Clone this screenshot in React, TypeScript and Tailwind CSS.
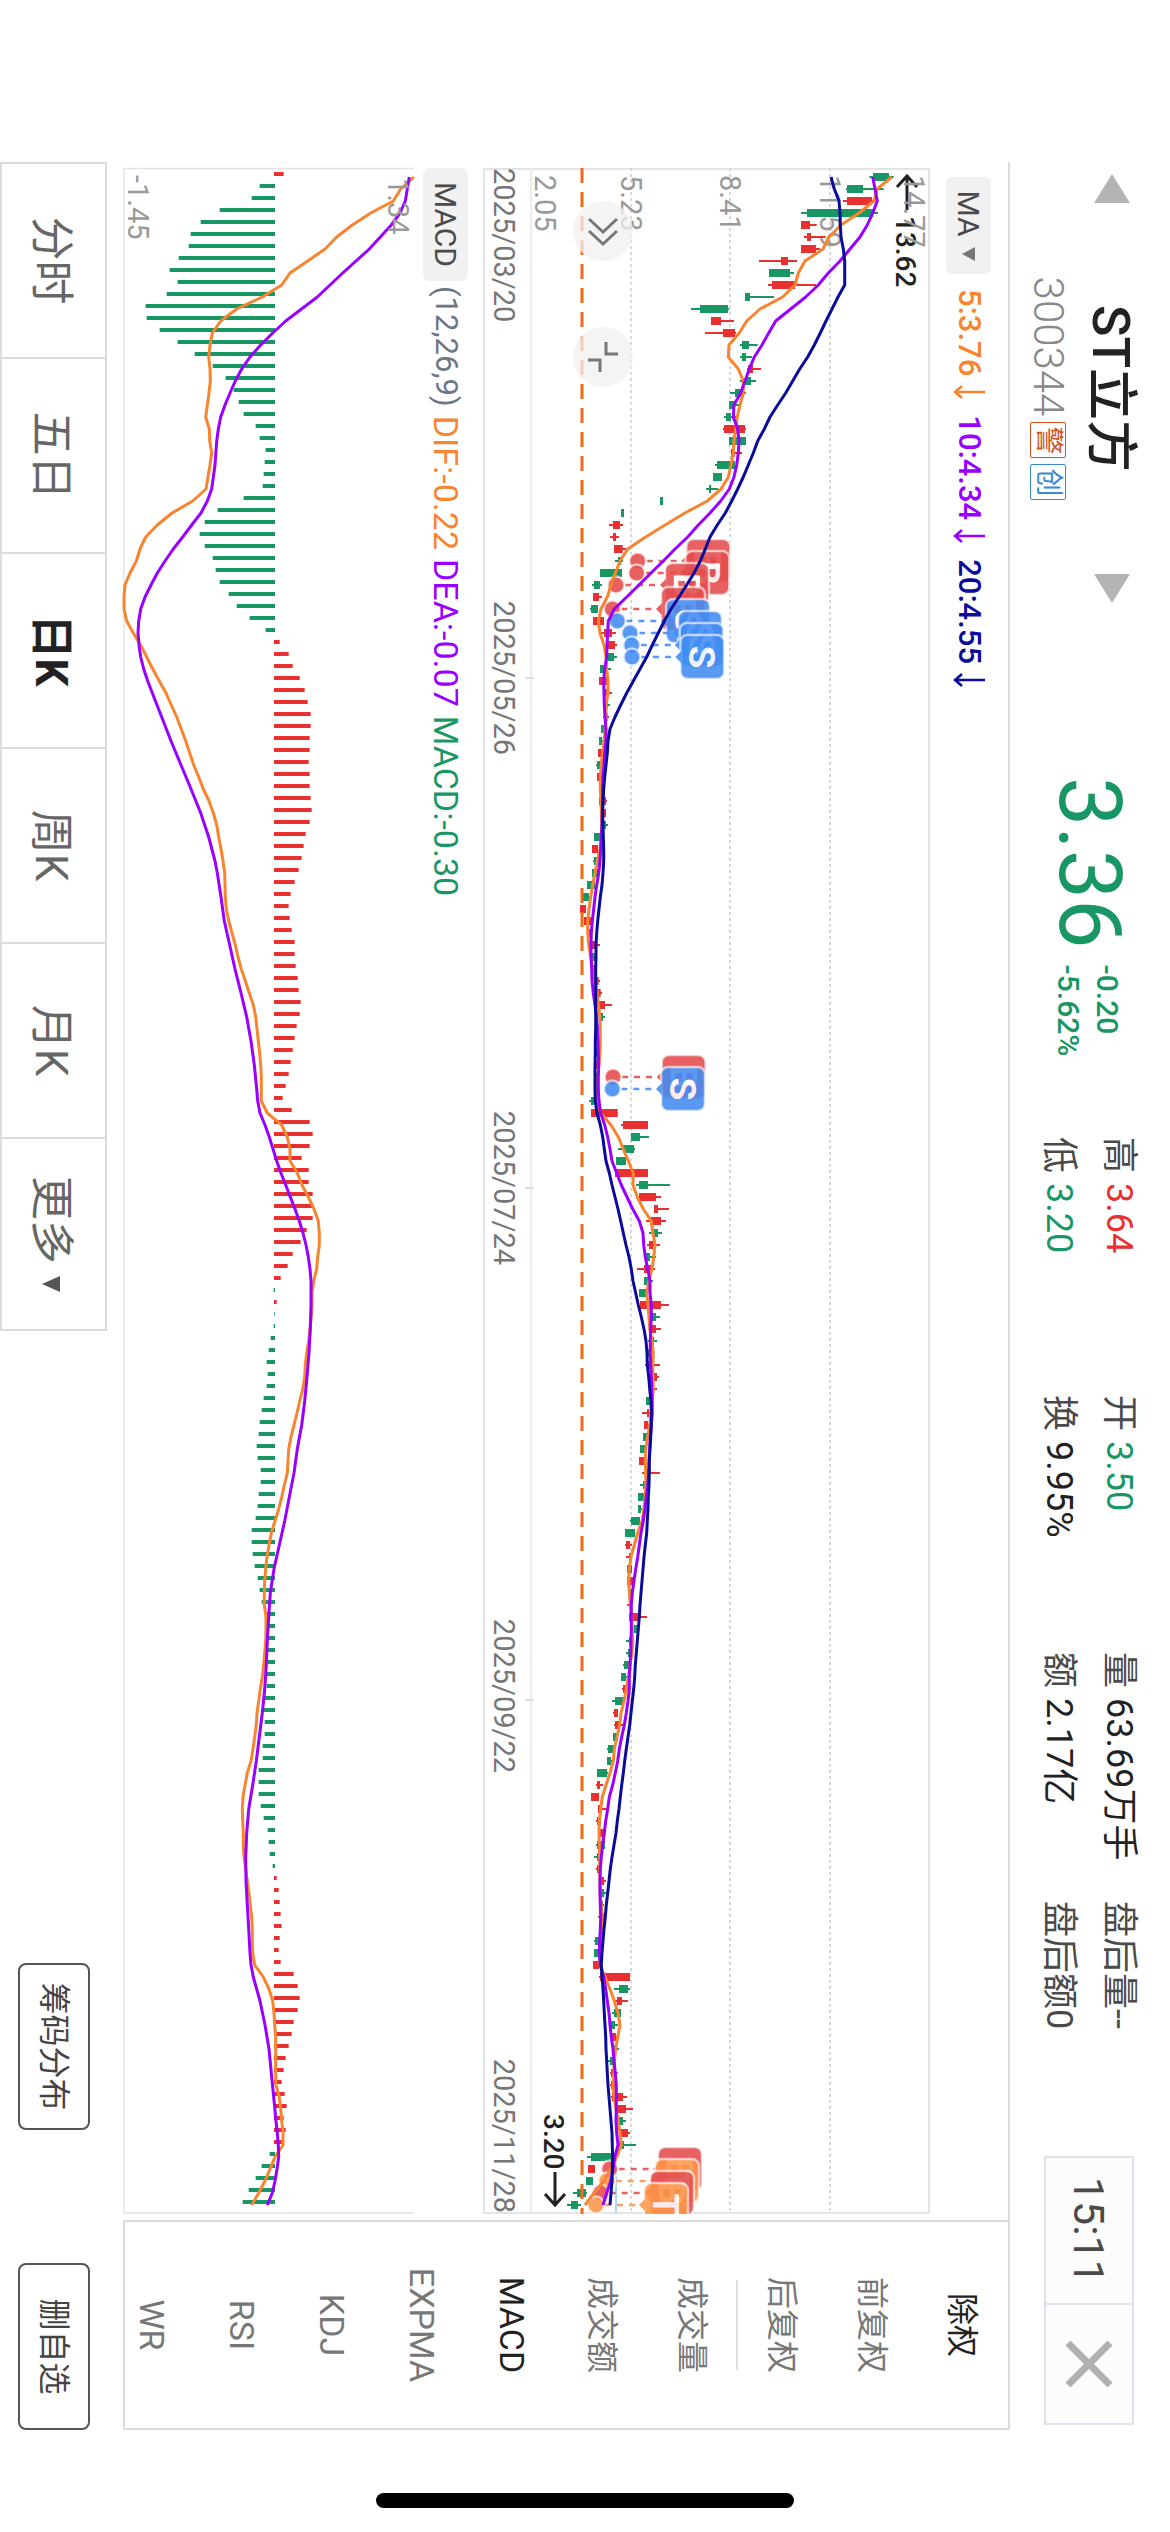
import React from "react";

/* ---------- chart data (levels in thirds of a pixel above the plot origin) ---------- */

// color, low, body low, body high, high
const CANDLES = `g 1168 1179 1227 1241|g 1098 1101 1149 1211|r 1089 1101 1176 1182|g 963 981 1180 1194|r 963 963 990 1010|r 972 981 993 1037|r 963 963 1008 1020|r 837 903 924 951|g 867 867 930 942|r 864 876 945 1008|g 795 795 810 882|g 633 660 744 747|r 693 693 723 762|r 675 729 765 768|g 780 786 807 833|g 780 786 798 816|r 801 804 819 843|g 780 795 813 828|g 750 765 792 798|g 747 747 765 780|g 732 738 753 768|r 729 732 795 798|g 747 747 798 798|r 753 753 764 786|g 705 711 765 765|g 699 699 726 726|g 678 687 693 714|g 540 540 549 549|g 423 423 432 432|r 387 399 420 429|r 390 399 408 417|r 402 402 428 438|g 405 414 424 429|g 360 360 426 426|g 336 342 360 366|r 339 339 357 366|g 330 333 354 354|r 339 339 372 372|r 363 372 396 408|r 378 380 405 411|g 378 384 402 411|g 360 360 384 393|r 357 357 381 381|r 375 375 387 396|g 372 375 383 390|r 369 372 383 387|g 363 363 375 375|g 357 357 366 375|r 354 354 370 370|g 348 351 366 366|r 351 351 366 366|g 357 357 366 366|r 357 357 378 381|r 366 366 378 378|g 360 366 378 384|g 342 342 363 363|r 336 336 354 354|g 339 342 357 357|g 336 336 354 354|g 321 321 345 345|g 309 309 327 330|r 300 300 318 318|r 312 312 333 333|r 324 324 336 336|r 333 336 348 360|g 333 336 348 348|r 339 339 348 348|r 348 350 356 360|r 350 353 362 366|r 357 357 375 396|g 357 360 369 375|g 345 348 357 360|r 348 348 357 357|g 345 345 357 357|r 345 345 356 356|g 345 345 354 354|r 345 345 354 354|g 327 333 342 342|r 333 333 413 413|r 423 429 504 504|g 453 453 480 507|g 414 429 462 465|g 408 408 438 438|r 405 405 504 504|g 468 477 504 570|r 477 477 528 543|r 522 522 534 567|r 498 510 543 558|g 507 516 534 546|r 501 507 519 540|g 495 498 510 528|r 471 492 513 525|g 492 492 507 519|g 477 477 499 499|r 480 480 543 567|g 516 516 528 540|r 516 516 528 543|g 504 513 522 531|g 498 501 513 513|r 495 501 510 540|r 516 522 531 537|r 510 513 520 531|g 498 498 510 510|r 486 501 507 510|r 492 492 504 513|g 489 489 504 504|g 480 480 495 495|r 477 477 495 495|r 486 495 507 540|g 480 489 495 495|g 474 474 492 492|g 474 474 483 486|g 450 453 480 480|g 435 435 465 465|r 435 438 450 456|r 438 447 453 456|g 441 441 456 456|r 441 441 459 462|g 444 450 456 458|r 441 447 452 455|r 447 447 474 501|g 462 462 474 474|g 438 447 453 456|g 438 444 453 456|g 429 432 450 450|g 423 423 438 444|r 426 429 439 444|g 396 405 432 435|r 399 402 414 414|r 402 405 417 432|g 399 399 414 414|g 381 384 402 405|g 381 381 393 399|g 351 351 381 384|r 348 351 360 369|r 333 333 357 357|r 354 354 366 384|r 348 351 363 363|r 357 360 372 372|g 348 351 375 375|g 342 351 362 362|r 348 351 363 363|r 363 363 372 378|g 360 363 372 378|g 360 363 369 372|r 354 360 372 372|r 360 360 367 367|g 342 345 360 360|g 342 342 354 354|r 339 339 357 357|r 357 360 450 450|g 402 417 444 450|r 405 411 426 444|g 396 402 423 423|g 390 390 405 414|r 393 393 408 411|g 396 399 408 417|g 384 390 402 402|r 390 393 405 413|r 390 393 405 408|r 393 396 429 441|r 411 411 438 459|g 411 414 429 438|r 420 423 444 450|g 414 414 432 468|g 321 333 399 399|r 324 324 345 345|g 318 318 339 339|g 279 291 318 321|g 261 273 294 303`
  .split("|")
  .map((row) => {
    const [tone, ...levels] = row.split(" ");
    return { tone, levels: levels.map(Number) };
  });

const MA5 = [1235,1192,1182,1137,1083,1047,1029,975,955,945,908,840,800,778,747,745,775,790,790,780,772,767,762,760,753,745,723,682,615,555,497,443,420,406,393,382,363,355,360,372,378,380,384,384,378,378,376,372,368,364,361,361,363,364,365,364,360,352,345,338,332,327,323,323,326,332,338,345,352,355,360,361,361,360,357,353,352,352,362,393,415,430,445,460,459,472,490,514,519,525,521,516,507,500,504,507,509,516,520,518,519,520,517,514,509,503,497,496,497,498,495,492,486,473,463,453,448,446,448,451,455,457,458,456,450,445,439,432,423,419,411,403,400,390,378,367,362,358,357,358,359,359,360,360,364,367,367,364,359,360,375,390,403,414,420,413,407,403,401,399,402,408,415,420,424,410,392,372,342,315];
const MA10 = [1178,1185,1192,1178,1162,1140,1110,1080,1045,1015,977,932,887,866,846,823,808,795,782,762,760,773,777,775,770,762,748,722,690,655,623,585,550,513,477,440,403,385,383,381,380,374,371,372,373,375,378,378,374,372,369,368,368,367,366,364,362,360,356,350,345,341,337,334,333,333,335,336,340,345,350,352,354,355,356,355,355,357,362,374,383,390,396,410,424,441,458,478,489,491,496,503,510,510,514,514,512,511,511,512,514,515,516,517,514,511,509,507,506,503,499,495,490,483,478,473,467,462,457,454,454,454,453,452,450,448,448,444,439,433,425,418,413,406,398,388,383,377,373,368,364,361,360,360,361,362,361,359,358,361,371,377,382,387,390,394,399,402,406,409,409,409,408,410,414,404,399,392,380,369];
const MA20 = [1053,1063,1077,1080,1081,1083,1090,1094,1094,1094,1074,1056,1038,1021,1003,983,959,938,917,893,870,853,833,820,805,790,773,755,736,712,690,676,661,642,620,597,573,553,535,517,500,480,460,440,422,405,390,384,382,378,374,371,369,368,369,370,371,371,369,366,361,357,353,350,348,348,347,347,347,347,347,347,346,346,345,345,345,346,351,361,368,373,378,388,396,405,414,422,430,438,447,454,459,467,475,484,492,498,501,502,506,509,513,514,514,512,510,508,508,507,505,504,502,500,496,492,489,486,483,480,478,475,472,469,466,464,461,457,453,449,444,439,434,430,425,421,417,412,408,402,396,391,387,383,379,376,372,369,366,364,366,369,371,373,375,377,378,380,382,384,387,390,393,396,397,398,397,396,393,390];

const HISTOGRAM = [29,-46,-70,-166,-223,-253,-259,-289,-316,-292,-325,-388,-385,-346,-292,-241,-187,-148,-124,-109,-94,-58,-46,-28,-31,-34,-37,-94,-172,-211,-226,-211,-187,-178,-166,-139,-115,-76,-28,17,44,56,77,92,101,110,110,107,107,104,107,107,110,113,107,95,89,83,74,62,50,44,47,53,62,62,65,71,74,80,77,68,62,56,50,44,35,26,53,107,116,107,83,104,104,116,118,116,98,80,56,41,20,-4,8,-2,-4,-13,-19,-25,-22,-25,-34,-40,-46,-49,-55,-52,-43,-43,-49,-52,-58,-70,-70,-67,-61,-52,-46,-40,-25,-23,-22,-21,-22,-25,-25,-30,-33,-31,-31,-37,-37,-49,-49,-49,-43,-34,-22,-19,-16,-7,8,14,17,20,23,17,14,20,59,71,77,71,59,53,44,35,29,23,32,38,29,35,26,-16,-40,-58,-79,-97];
const DIF = [942,902,880,812,757,710,675,623,570,545,487,410,362,337,330,326,330,331,327,322,317,328,329,335,330,324,318,278,216,172,137,120,109,90,75,72,72,80,100,122,140,158,178,198,214,230,244,257,269,281,296,310,327,340,350,356,363,369,374,375,376,379,386,396,406,414,424,436,448,460,467,471,475,479,482,484,484,484,502,545,562,570,570,592,606,625,642,655,658,658,653,650,641,636,636,634,630,626,620,616,614,608,599,591,582,573,566,564,562,553,545,536,525,514,507,501,497,494,493,493,498,498,497,494,491,487,481,476,471,469,464,459,453,442,435,429,427,428,430,430,432,437,442,447,451,455,457,457,458,464,490,507,518,522,524,527,527,527,527,528,538,542,545,549,549,525,510,495,476,455];
const DEA: [number, number][] = [[0,928],[2,916],[3,900],[4,874],[6,808],[8,728],[10,652],[12,557],[13,518],[14,482],[15,450],[16,425],[17,406],[18,390],[19,375],[20,362],[21,355],[22,350],[24,345],[26,335],[27,322],[28,303],[29,275],[30,248],[31,220],[32,195],[33,172],[34,153],[35,135],[36,122],[37,116],[38,114],[39,117],[40,122],[41,131],[42,143],[43,157],[45,185],[47,213],[49,243],[51,273],[53,302],[55,326],[57,345],[58,352],[60,363],[62,373],[64,389],[66,405],[68,423],[70,440],[72,453],[74,463],[76,470],[77,473],[78,480],[79,495],[80,508],[81,519],[82,530],[83,543],[84,557],[85,571],[86,585],[87,598],[88,609],[89,618],[90,625],[91,630],[92,633],[94,633],[96,631],[98,627],[100,621],[102,614],[104,605],[106,592],[108,582],[110,568],[112,554],[114,538],[116,522],[118,511],[120,506],[122,502],[124,499],[126,494],[128,487],[130,478],[132,469],[134,458],[136,446],[138,440],[140,437],[142,438],[144,442],[146,446],[148,450],[149,453],[150,460],[152,480],[154,495],[156,507],[158,514],[160,521],[162,528],[163,532],[164,535],[165,536],[166,531],[167,525],[168,517],[169,502]];

// day index, dot level, flag's lower level, color, letter
const TRADES: [number, number, number, string, string][] = [
  [32, 473, 622, "#e44c4d", "B"],
  [33, 470, 619, "#e44c4d", "B"],
  [34, 408, 558, "#e44c4d", "B"],
  [36, 397, 546, "#e44c4d", "B"],
  [37, 412, 561, "#438cf3", "S"],
  [38, 450, 597, "#438cf3", "S"],
  [39, 455, 602, "#438cf3", "S"],
  [40, 456, 604, "#438cf3", "S"],
  [75, 399, 548, "#e44c4d", "B"],
  [76, 397, 546, "#438cf3", "S"],
  [166, 389, 537, "#e44c4d", "B"],
  [167, 380, 528, "#ff9548", "T"],
  [168, 362, 513, "#e44c4d", "B"],
  [169, 348, 495, "#ff9548", "T"],
];

const RED = "#e93030";
const GREEN = "#189664";
const ORANGE = "#f8842f";
const PURPLE = "#9900ff";
const NAVY = "#0a0a9b";

const dayX = (i: number) => 177 + 12 * i;
const priceY = (v: number) => 690 - v / 3;
const macdY = (v: number) => 1070 - v / 3;

const linePoints = (values: number[], toY: (v: number) => number) =>
  values.map((v, i) => `${dayX(i)},${toY(v).toFixed(1)}`).join(" ");

function Line({ points, color }: { points: string; color: string }) {
  return <polyline points={points} fill="none" stroke={color} strokeWidth="3" strokeLinejoin="round" />;
}

function Trade({ trade }: { trade: [number, number, number, string, string] }) {
  const [day, dot, flag, color, letter] = trade;
  const x = dayX(day);
  const dotY = priceY(dot);
  const flagY = priceY(flag);
  return (
    <g opacity="0.88">
      <line x1={x} x2={x} y1={dotY - 9} y2={flagY} stroke={color} strokeWidth="2.500" strokeDasharray="6 6" />
      <circle cx={x} cy={dotY} r="8.5" fill={color} stroke="#fff" strokeOpacity="0.7" strokeWidth="2.5" />
      <rect x={x - 22} y={flagY - 43} width="44" height="44" rx="7" fill={color} stroke="#fff" strokeOpacity="0.7" strokeWidth="2.5" />
      <path d={`M${x - 6} ${flagY}h12l-6 6z`} fill={color} />
      <text x={x} y={flagY - 8} textAnchor="middle" fontSize="37" fontWeight="700" fill="#fff">
        {letter}
      </text>
    </g>
  );
}

function PriceChart() {
  return (
    <svg viewBox="168 240 2046 447" className="block h-auto w-full" role="img" aria-label="日K线图">
      <rect x="169" y="241" width="2044" height="445" fill="none" stroke="#e4e4e4" strokeWidth="2" />
      <path d="M168 639H2214" stroke="#ececec" strokeWidth="2" />
      {[340, 440, 539].map((y) => (
        <path key={y} d={`M168 ${y}H2214`} stroke="#d9d9d9" strokeWidth="2" strokeDasharray="3 3" />
      ))}
      {[678, 1188, 1700].map((x) => (
        <path key={x} d={`M${x} 636v9`} stroke="#dcdcdc" strokeWidth="2" />
      ))}
      <path d="M2157 554H2214" stroke="#a6dcfb" strokeWidth="2" />

      <g fontSize="29" fill="#767676">
        <text x="168" y="676">2025/03/20</text>
        <text x="678" y="676" textAnchor="middle">2025/05/26</text>
        <text x="1188" y="676" textAnchor="middle">2025/07/24</text>
        <text x="1696" y="676" textAnchor="middle">2025/09/22</text>
        <text x="2213" y="676" textAnchor="end">2025/11/28</text>
      </g>

      <g fill="none" stroke="#222" strokeWidth="3">
        <path d="M210 263H176M187 253l-11 10 11 10" />
        <path d="M2172 615H2206M2194 605l11 10-11 10" />
      </g>
      <g fontSize="28" fontWeight="500" fill="#222">
        <text x="216" y="274">13.62</text>
        <text x="2114" y="626">3.20</text>
      </g>
      <g fontSize="29" fill="#999">
        <text x="175" y="266">14.77</text>
        <text x="175" y="350">11.59</text>
        <text x="175" y="450">8.41</text>
        <text x="175" y="549">5.23</text>
        <text x="175" y="635">2.05</text>
      </g>

      {CANDLES.map(({ tone, levels: [low, bottom, top, high] }, i) => (
        <g key={i} fill={tone === "r" ? RED : GREEN}>
          <rect x={dayX(i) - 1} y={priceY(high)} width="2" height={(high - low) / 3} />
          <rect x={dayX(i) - 4} y={priceY(top)} width="8" height={(top - bottom) / 3} />
        </g>
      ))}
      <path d="M168 588H2214" stroke="#f26b12" strokeWidth="3" strokeDasharray="15 9" />
      {TRADES.map((trade) => (
        <Trade key={trade[0]} trade={trade} />
      ))}
      <Line points={linePoints(MA5, priceY)} color={ORANGE} />
      <Line points={linePoints(MA10, priceY)} color={PURPLE} />
      <Line points={linePoints(MA20, priceY)} color={NAVY} />

      <g fill="#f0f0f0" fillOpacity="0.75">
        <circle cx="231" cy="567" r="30" />
        <circle cx="357" cy="567" r="30" />
      </g>
      <g fill="none" stroke="#777" strokeWidth="3">
        <path d="M219 553l13 14-13 14M231 553l13 14-13 14" />
        <path d="M342 564h12v-12M372 570h-12v12" />
      </g>
    </svg>
  );
}

function MacdChart() {
  return (
    <svg viewBox="168 756 2046 291" className="block h-auto w-full overflow-visible" role="img" aria-label="MACD">
      <path d="M168.500 756V1046H2213V756" fill="none" stroke="#e4e4e4" strokeWidth="1.500" />
      {HISTOGRAM.map((v, i) => (
        <rect
          key={i}
          x={172 + 12 * i}
          y={v > 0 ? 896 - v / 3 : 895}
          width="4"
          height={Math.abs(v) / 3}
          fill={v > 0 ? RED : GREEN}
        />
      ))}
      <Line points={linePoints(DIF, macdY)} color={ORANGE} />
      <Line points={DEA.map(([i, v]) => `${dayX(i)},${macdY(v).toFixed(1)}`).join(" ")} color={PURPLE} />
      <g fontSize="29" fill="#999">
        <text x="178" y="782">1.34</text>
        <text x="175" y="1042">-1.45</text>
      </g>
    </svg>
  );
}

function Stat({ label, value, tone }: { label: string; value: string; tone: string }) {
  return (
    <div className="flex gap-2.5">
      <dt className="text-[#4a4a4a]">{label}</dt>
      <dd className={tone}>{value}</dd>
    </div>
  );
}

function Average({ text, tone }: { text: string; tone: string }) {
  return (
    <span className={`flex items-center gap-2 ${tone}`}>
      {text}
      <svg viewBox="0 0 16 32" className="h-8 w-4" fill="none" stroke="currentColor" strokeWidth="2.500">
        <path d="M8 0v30M2 23l6 7 6-7" />
      </svg>
    </span>
  );
}

function Header() {
  return (
    <header className="flex h-[162px] shrink-0 border-b-2 border-[#dcdcdc] pr-[5px] pl-3">
      <button aria-label="上一只" className="mt-10 h-9">
        <svg viewBox="0 0 29 36" className="h-9 w-[29px]" fill="#b4b4b4">
          <path d="M0 18L29 0v36z" />
        </svg>
      </button>
      <div className="flex w-[371px] flex-col items-center pt-[30px]">
        <h1 className="text-[52px] leading-[60px] font-medium text-[#222]">ST立方</h1>
        <div className="mt-3.5 flex items-center gap-1.5 text-[42px] leading-9 font-light text-[#888]">
          300344
          <span className="flex h-9 w-9 items-center justify-center rounded-xs border border-[#d4501e] text-[28px] font-normal text-[#d4501e]">
            警
          </span>
          <span className="flex h-9 w-9 items-center justify-center rounded-xs border border-[#3a8ad2] text-[28px] font-normal text-[#3a8ad2]">
            创
          </span>
        </div>
      </div>
      <button aria-label="下一只" className="mt-10 h-9">
        <svg viewBox="0 0 29 36" className="h-9 w-[29px]" fill="#b4b4b4">
          <path d="M29 18L0 0v36z" />
        </svg>
      </button>
      <div className="ml-[174px] flex w-[360px] items-center gap-4 text-[#189664]">
        <strong className="text-[88px] leading-[100px] font-normal">3.36</strong>
        <div className="pt-1 text-[30px] leading-[39px] font-medium">
          <div>-0.20</div>
          <div>-5.62%</div>
        </div>
      </div>
      <dl className="mt-[21px] grid grid-flow-col grid-cols-[258px_257px_249px_auto] grid-rows-2 self-start text-[36px] leading-[60px] whitespace-nowrap">
        <Stat label="高" value="3.64" tone="text-[#e93030]" />
        <Stat label="低" value="3.20" tone="text-[#189664]" />
        <Stat label="开" value="3.50" tone="text-[#189664]" />
        <Stat label="换" value="9.95%" tone="text-[#222]" />
        <Stat label="量" value="63.69万手" tone="text-[#222]" />
        <Stat label="额" value="2.17亿" tone="text-[#222]" />
        <div className="flex text-[#4a4a4a]">
          <dt>盘后量</dt>
          <dd>--</dd>
        </div>
        <div className="flex text-[#4a4a4a]">
          <dt>盘后额</dt>
          <dd>0</dd>
        </div>
      </dl>
      <div className="mt-9 ml-auto flex h-[90px] border-2 border-[#e0e1f0] bg-[#fcfcfc]">
        <time className="flex w-[147px] items-center justify-center border-r-2 border-[#e0e1f0] text-[43px] text-[#4a4a4a]">
          15:11
        </time>
        <button aria-label="关闭" className="flex w-[118px] items-center justify-center">
          <svg viewBox="0 0 46 46" className="h-[46px] w-[46px]" stroke="#b0b0b0" strokeWidth="7">
            <path d="M2 2l42 42M44 2L2 44" />
          </svg>
        </button>
      </div>
    </header>
  );
}

const INDICATORS = ["成交量", "成交额", "MACD", "EXPMA", "KDJ", "RSI", "WR"];

function Options() {
  return (
    <aside className="flex h-full w-[210px] flex-col gap-[34px] border-x-2 border-b-2 border-[#dcdcdc] pt-[18px] text-[32px] text-[#777]">
      {["除权", "前复权", "后复权"].map((name) => (
        <button key={name} className={`h-14 w-full shrink-0 ${name === "除权" ? "text-[#222]" : ""}`}>
          {name}
        </button>
      ))}
      <hr className="mx-auto -my-[18px] w-[90px] shrink-0 border-t-2 border-[#e0e0e0]" />
      {INDICATORS.map((name) => (
        <button
          key={name}
          className={`h-14 w-full shrink-0 ${/[A-Z]/.test(name) ? "text-[34px]" : ""} ${name === "MACD" ? "text-[#222]" : ""}`}
        >
          {name}
        </button>
      ))}
    </aside>
  );
}

const PERIODS = ["分时", "五日", "日K", "周K", "月K"];

export default function App() {
  return (
    <div className="h-screen w-screen overflow-hidden bg-white">
      <div className="flex h-[100vw] w-[100vh] origin-top-left translate-x-[100vw] rotate-90 bg-white pl-[162px] font-['Roboto','Noto_Sans_CJK_SC',sans-serif]">
        <main className="flex min-w-0 flex-1 flex-col">
          <Header />
          <div className="flex min-h-0 flex-1">
            <section className="min-w-0 flex-1 px-1.5">
              <div className="flex h-[78px] items-center gap-[15px] pl-[9px] text-[31px] font-medium">
                <button className="flex h-[45px] w-[97px] items-center justify-center gap-2.5 rounded-md bg-[#f1f1f1] text-[30px] font-normal text-[#4a4a4a]">
                  MA
                  <svg viewBox="0 0 14 13" className="h-[13px] w-3.5" fill="#777">
                    <path d="M0 0h14L7 13z" />
                  </svg>
                </button>
                <Average text="5:3.76" tone="text-[#f8842f]" />
                <Average text="10:4.34" tone="text-[#9900ff]" />
                <Average text="20:4.55" tone="text-[#0a0a9b]" />
              </div>
              <PriceChart />
              <div className="flex h-[69px] items-center gap-[9px] pt-[6px] text-[34px]">
                <button className="flex h-[45px] w-[113px] items-center justify-center rounded-md bg-[#f1f1f1] text-[30px] text-[#4a4a4a]">
                  MACD
                </button>
                <span className="-ml-1 text-[31px] text-[#6b7785]">(12,26,9)</span>
                <span className="text-[#f8842f]">DIF:-0.22</span>
                <span className="text-[#9900ff]">DEA:-0.07</span>
                <span className="text-[#189664]">MACD:-0.30</span>
              </div>
              <MacdChart />
            </section>
            <Options />
          </div>
          <footer className="flex h-[123px] shrink-0 items-start">
            <nav className="mt-4 flex h-[107px] border-2 border-[#dcdcdc] text-[44px] text-[#666]">
              {PERIODS.map((name) => (
                <button
                  key={name}
                  className={`w-[195px] border-r-2 border-[#dcdcdc] pt-1 ${name === "日K" ? "font-bold text-[#222]" : ""}`}
                >
                  {name}
                </button>
              ))}
              <button className="flex w-[190px] items-center justify-center gap-3 pt-1">
                更多
                <svg viewBox="0 0 16 18" className="h-[18px] w-4" fill="#555">
                  <path d="M0 0h16L8 18z" />
                </svg>
              </button>
            </nav>
            <div className="mt-[33px] ml-auto flex gap-[133px] text-[32px] text-[#444]">
              <button className="h-[72px] w-[167px] rounded-lg border-2 border-[#555]">筹码分布</button>
              <button className="h-[72px] w-[167px] rounded-lg border-2 border-[#555]">删自选</button>
            </div>
          </footer>
        </main>
        <div className="flex w-[102px] shrink-0 items-center justify-center pl-[38px]">
          <div className="h-[418px] w-[15px] rounded-full bg-black" />
        </div>
      </div>
    </div>
  );
}
